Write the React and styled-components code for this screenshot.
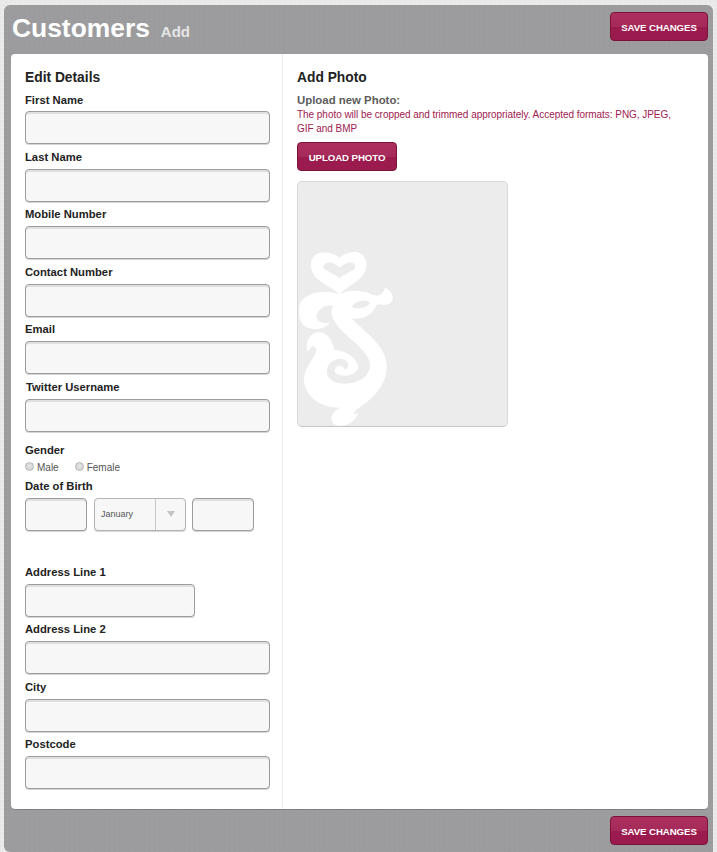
import * as React from 'react';
import styled, { createGlobalStyle } from 'styled-components';

const Global = createGlobalStyle`
    html, body { margin: 0; padding: 0; height: 852px; overflow: hidden; }
    body {
        font-family: "Liberation Sans", Arial, sans-serif;
        background-color: #e9e9e9;
        background-image:
            repeating-linear-gradient(0deg, rgba(255,255,255,.2) 0 1px, transparent 1px 4px),
            repeating-linear-gradient(90deg, rgba(0,0,0,.012) 0 1px, transparent 1px 5px);
    }
`;

const Panel = styled.div`
    margin: 5px 4px 0 4px;
    height: 847px;
    padding: 0 5px 0 7px;
    box-sizing: border-box;
    border-radius: 6px 6px 0 6px;
    background-color: #9c9c9e;
    background-image:
        repeating-linear-gradient(0deg, rgba(255,255,255,.015) 0 1px, transparent 1px 4px),
        repeating-linear-gradient(90deg, rgba(0,0,0,.012) 0 1px, transparent 1px 5px);
    display: flex;
    flex-direction: column;
`;

const Header = styled.div`
    height: 49px;
    display: flex;
    align-items: flex-start;
    justify-content: space-between;
`;

const Title = styled.h1`
    margin: 7px 0 0 1px;
    font-size: 26.4px;
    line-height: 32px;
    font-weight: bold;
    color: #fff;
`;

const SubTitle = styled.span`
    margin-left: 11px;
    font-size: 15px;
    color: #e6e6e6;
`;

const Button = styled.button`
    box-sizing: border-box;
    width: ${p => p.$width}px;
    height: 29px;
    padding: 1px 0 0 0;
    border: 1px solid #7d1239;
    border-radius: 4px;
    background: linear-gradient(to bottom, #ab3060 0%, #a62a59 50%, #9b1b4e 52%, #9b1b4e 100%);
    color: #fff;
    font-family: "Liberation Sans", Arial, sans-serif;
    font-size: 9.7px;
    letter-spacing: -0.1px;
    font-weight: bold;
    text-transform: uppercase;
`;

const TopButton = styled(Button)`
    margin-top: 7px;
`;

const Card = styled.div`
    height: 755px;
    background: #fff;
    border-radius: 4px;
    display: flex;
    box-shadow: 0 1px 0 #808082;
`;

const LeftCol = styled.div`
    box-sizing: border-box;
    width: 272px;
    padding: 17px 12px 0 14px;
    border-right: 1px solid #ececec;
`;

const RightCol = styled.div`
    flex: 1;
    padding: 17px 0 0 14px;
`;

const SectionTitle = styled.h2`
    margin: 0;
    height: 14px;
    font-size: 13.8px;
    line-height: 14px;
    font-weight: bold;
    color: #222;
`;

const Field = styled.div`
    height: ${p => p.$height || 57.5}px;
`;

const Label = styled.label`
    display: block;
    height: 14px;
    padding-left: ${p => (p.$nudge ? 1 : 0)}px;
    font-size: 11.25px;
    line-height: 12px;
    font-weight: bold;
    color: #222;
`;

const FirstField = styled(Field)`
    margin-top: 9px;
`;

const TextInput = styled.input`
    display: block;
    box-sizing: border-box;
    width: ${p => p.$width || 245}px;
    height: 33px;
    margin-top: ${p => (p.$gap === undefined ? 4 : p.$gap)}px;
    border: 1px solid #9c9c9c;
    border-radius: 4px;
    background: #f7f7f7;
    box-shadow: inset 0 2px 0 #e0e0e0, 0 1px 0 #d6d6d6;
    outline: none;
`;

const RadioRow = styled.div`
    display: flex;
    align-items: center;
    height: 15px;
    margin: 2px 0 5px 0;
`;

const RadioItem = styled.label`
    display: flex;
    align-items: center;
    margin-right: 16px;
    font-size: 10px;
    color: #555;
`;

const Radio = styled.input`
    appearance: none;
    width: 9px;
    height: 9px;
    margin: -2px 3px 0 0;
    border: 1px solid #b5b5b5;
    border-radius: 50%;
    background: radial-gradient(circle at 50% 40%, #e4e4e4, #cfcfcf);
`;

const DobRow = styled.div`
    display: flex;
    gap: 6px;
    margin-top: 4px;
`;

const Select = styled.div`
    box-sizing: border-box;
    width: 92px;
    height: 33px;
    margin-left: 1px;
    border: 1px solid #b4b4b4;
    border-radius: 4px;
    background: #f7f7f7;
    box-shadow: 0 1px 0 #d6d6d6;
    display: flex;
`;

const SelectValue = styled.div`
    flex: 1;
    padding-left: 6px;
    font-size: 9px;
    line-height: 31px;
    color: #555;
    border-right: 1px solid #c8c8c8;
`;

const SelectArrow = styled.div`
    width: 29px;
    display: flex;
    align-items: center;
    justify-content: center;
    &::after {
        content: "";
        border-left: 4px solid transparent;
        border-right: 4px solid transparent;
        border-top: 6px solid #c4c4c4;
    }
`;

const UploadTitle = styled.div`
    margin-top: 8px;
    font-size: 11.4px;
    line-height: 14px;
    font-weight: bold;
    color: #5c5c5c;
`;

const UploadHint = styled.p`
    margin: 1px 0 0 0;
    width: 380px;
    font-size: 10px;
    letter-spacing: -0.04px;
    line-height: 14px;
    color: #a0204f;
`;

const UploadButton = styled(Button)`
    display: block;
    margin-top: 6px;
    height: 29px;
`;

const PhotoBox = styled.div`
    position: relative;
    overflow: hidden;
    box-sizing: border-box;
    width: 211px;
    height: 246px;
    margin-top: 10px;
    border: 1px solid #d8d8d8;
    border-bottom-color: #c6c6c6;
    border-radius: 5px;
    background: #ececec;
`;

const Watermark = styled.svg`
    position: absolute;
    left: -8px;
    top: 53px;
    width: 225px;
    height: 200px;
`;

const BottomBar = styled.div`
    display: flex;
    justify-content: flex-end;
    padding-top: 7px;
`;

const TOP_FIELDS = ['Last Name', 'Mobile Number', 'Contact Number', 'Email'];

const App = () => {
    return (<>
        <Global />
        <Panel>
            <Header>
                <Title>Customers<SubTitle>Add</SubTitle></Title>
                <TopButton $width={98}>Save Changes</TopButton>
            </Header>
            <Card>
                <LeftCol>
                    <SectionTitle>Edit Details</SectionTitle>
                    <FirstField $height={56.5}>
                        <Label>First Name</Label>
                        <TextInput type="text" $gap={3} />
                    </FirstField>
                    {TOP_FIELDS.map((name) => (
                        <Field key={name}>
                            <Label>{name}</Label>
                            <TextInput type="text" />
                        </Field>
                    ))}
                    <Field $height={63}>
                        <Label $nudge>Twitter Username</Label>
                        <TextInput type="text" />
                    </Field>
                    <Label>Gender</Label>
                    <RadioRow>
                        <RadioItem><Radio type="radio" name="gender" />Male</RadioItem>
                        <RadioItem><Radio type="radio" name="gender" />Female</RadioItem>
                    </RadioRow>
                    <Field $height={86}>
                        <Label>Date of Birth</Label>
                        <DobRow>
                            <TextInput type="text" $width={62} $gap={0} />
                            <Select>
                                <SelectValue>January</SelectValue>
                                <SelectArrow />
                            </Select>
                            <TextInput type="text" $width={62} $gap={0} />
                        </DobRow>
                    </Field>
                    <Field>
                        <Label>Address Line 1</Label>
                        <TextInput type="text" $width={170} />
                    </Field>
                    <Field>
                        <Label>Address Line 2</Label>
                        <TextInput type="text" />
                    </Field>
                    <Field>
                        <Label>City</Label>
                        <TextInput type="text" />
                    </Field>
                    <Field>
                        <Label>Postcode</Label>
                        <TextInput type="text" />
                    </Field>
                </LeftCol>
                <RightCol>
                    <SectionTitle>Add Photo</SectionTitle>
                    <UploadTitle>Upload new Photo:</UploadTitle>
                    <UploadHint>The photo will be cropped and trimmed appropriately. Accepted formats: PNG, JPEG, GIF and BMP</UploadHint>
                    <UploadButton $width={100}>Upload Photo</UploadButton>
                    <PhotoBox>
                        <Watermark viewBox="0 0 675 600">
                            <path fill="#fff" fillRule="evenodd" d="M148 178 C130 160 95 145 75 125 C55 100 60 65 85 55 C105 48 130 55 148 68 C165 55 190 45 210 55 C235 68 235 105 215 125 C195 145 165 160 148 178 Z M148 130 C135 115 110 112 100 98 C100 85 115 78 130 85 C138 90 145 95 148 97 C155 92 165 85 180 82 C192 82 198 90 195 100 C185 112 160 118 148 130 Z" />
                            <path fill="#fff" fillRule="evenodd" d="M148 178 C175 165 200 165 230 172 C255 185 275 190 285 158 C310 170 315 190 300 205 C285 215 265 205 260 210 C250 240 215 255 185 250 C220 290 290 330 290 395 C290 450 250 490 205 520 C190 530 185 540 205 535 C195 560 175 572 150 572 C125 572 118 550 130 535 C135 525 150 520 150 518 C100 520 45 490 42 435 C42 395 70 380 80 345 C72 325 60 335 53 352 C45 325 55 295 85 292 C110 290 128 315 133 345 C160 345 200 365 205 395 C205 410 185 420 165 422 C145 422 130 415 135 402 C140 390 160 388 165 405 C178 398 178 378 160 373 C135 368 110 385 110 410 C110 432 135 446 165 446 C205 446 240 425 240 390 C240 350 175 310 145 275 C125 250 118 230 130 212 C110 210 90 215 80 240 C75 255 95 272 120 260 C110 275 95 283 70 282 C35 280 20 250 30 205 C45 175 100 160 148 178 Z M185 215 C200 195 230 190 240 205 C230 220 200 225 185 215 Z" />
                        </Watermark>
                    </PhotoBox>
                </RightCol>
            </Card>
            <BottomBar>
                <Button $width={98}>Save Changes</Button>
            </BottomBar>
        </Panel>
    </>);
}

export default App;
